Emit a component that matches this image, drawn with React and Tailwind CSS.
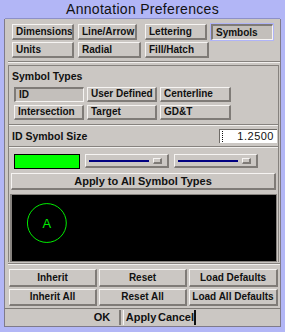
import React from "react";

const raised =
  "border-t border-l border-b-2 border-r-2 border-t-[#f6f4f2] border-l-[#f6f4f2] border-b-[#7f7b77] border-r-[#7f7b77] bg-[#cbc7c3]";
const sunken =
  "border-t-2 border-l-2 border-b border-r border-t-[#7f7b77] border-l-[#7f7b77] border-b-[#f6f4f2] border-r-[#f6f4f2] bg-[#c3bfbb]";

const Btn = ({ label, w, h = "h-[16px]", pressed, center, ring }) => (
  <div
    className={`${w} ${h} ${ring ? "outline outline-1 outline-[#b0b4f8]" : ""} ${
      pressed ? sunken : raised
    } flex items-center ${center ? "justify-center" : "pl-[3px]"} text-[10px] font-bold leading-none text-[#111] whitespace-nowrap overflow-hidden`}
  >
    {label}
  </div>
);

const Sep = ({ cls = "" }) => (
  <div className={`border-t border-b border-t-[#86827e] border-b-[#f2f0ee] ${cls}`} />
);

const Slider = ({ line, thumb }) => (
  <div className={`w-[84px] h-[14px] ${raised} flex items-center pl-[3px]`}>
    <div className={`${line} h-[2px] bg-[#000080]`} />
    <div className={`${thumb} w-[9px] h-[6px] ${raised}`} />
  </div>
);

export default function App() {
  return (
    <div
      className="w-[285px] h-[332px] bg-[#b2b6f6] flex flex-col overflow-hidden"
      style={{ fontFamily: '"Liberation Sans", Arial, sans-serif' }}
    >
      {/* title */}
      <div className="h-[19px] flex items-center justify-center text-[14px] leading-none tracking-[0.3px] text-[#111] border-b border-[#8d90c8] mx-[5px]">
        Annotation Preferences
      </div>

      <div className="flex-1 mx-[4px] mb-[5px] bg-[#cbc7c3] border-l border-r border-b border-[#7f7b8a] flex flex-col">
        {/* tabs */}
        <div className="pt-[5px] pl-[7px] flex flex-col gap-[2px]">
          <div className="flex">
            <Btn label="Dimensions" w="w-[62px]" />
            <div className="w-[4px]" />
            <Btn label="Line/Arrow" w="w-[59px]" />
            <div className="w-[8px]" />
            <Btn label="Lettering" w="w-[62px]" />
            <div className="w-[4px]" />
            <Btn label="Symbols" w="w-[62px]" pressed ring />
          </div>
          <div className="flex">
            <Btn label="Units" w="w-[62px]" />
            <div className="w-[4px]" />
            <Btn label="Radial" w="w-[63px]" />
            <div className="w-[4px]" />
            <Btn label="Fill/Hatch" w="w-[64px]" />
          </div>
        </div>

        <Sep cls="mt-[3px] ml-[3px]" />

        {/* frame */}
        <div className="mt-[2px] ml-[3px] mr-[1px] border-l border-r border-t border-l-[#86827e] border-r-[#86827e] border-t-[#86827e] flex flex-col">
          <div className="h-[15px] pl-[3px] flex items-end text-[10.5px] font-bold leading-none text-[#111]">
            Symbol Types
          </div>
          <div className="pt-[6px] pl-[5px] flex flex-col gap-[3px]">
            <div className="flex gap-[3px]">
              <Btn label="ID" w="w-[70px]" h="h-[15px]" pressed />
              <Btn label="User Defined" w="w-[70px]" h="h-[15px]" />
              <Btn label="Centerline" w="w-[71px]" h="h-[15px]" />
            </div>
            <div className="flex gap-[3px]">
              <Btn label="Intersection" w="w-[70px]" h="h-[15px]" />
              <Btn label="Target" w="w-[70px]" h="h-[15px]" />
              <Btn label="GD&T" w="w-[71px]" h="h-[15px]" />
            </div>
          </div>

          <Sep cls="mt-[4px]" />

          <div className="h-[20px] flex items-center justify-between pl-[3px] pr-[1px]">
            <span className="text-[10.5px] font-bold leading-none text-[#111]">
              ID Symbol Size
            </span>
            <div className="w-[58px] h-[14px] bg-white border-t border-l border-t-[#6f6b67] border-l-[#6f6b67] flex items-center justify-between pl-[2px] pr-[3px] text-[11px] leading-none text-[#111]">
              <span className="w-[1px] h-[11px] border-l border-dotted border-[#111]" />
              <span className="tracking-[0.5px]">1.2500</span>
            </div>
          </div>

          <Sep />

          <div className="h-[24px] flex items-center gap-[5px] pl-[5px] pt-[2px]">
            <div className="w-[66px] h-[15px] bg-[#00ff00] border border-black" />
            <Slider line="w-[60px]" thumb="ml-[4px]" />
            <Slider line="w-[60px]" thumb="ml-[4px]" />
          </div>

          <div className="px-[2px] pt-[1px]">
            <div
              className={`h-[17px] ${raised} flex items-center justify-center text-[11px] font-bold leading-none text-[#111]`}
            >
              Apply to All Symbol Types
            </div>
          </div>

          <div className="px-[1px] pt-[4px]">
            <div className="h-[68px] border border-[#86827e] border-l-[2px] border-l-[#86827e] bg-black">
              <svg width="100%" height="66" viewBox="0 0 265 66">
                <circle cx="35" cy="28" r="19.5" fill="none" stroke="#00ee00" strokeWidth="1" />
                <text
                  x="35"
                  y="33"
                  textAnchor="middle"
                  fontSize="13"
                  fill="#00ee00"
                  fontFamily="Liberation Sans, Arial, sans-serif"
                >
                  A
                </text>
              </svg>
            </div>
          </div>
        </div>

        <Sep cls="mt-[1px] ml-[3px]" />

        {/* bottom buttons */}
        <div className="pt-[4px] pl-[4px] flex flex-col gap-[2px]">
          <div className="flex gap-[2px]">
            <Btn label="Inherit" w="w-[88px]" h="h-[18px]" center />
            <Btn label="Reset" w="w-[88px]" h="h-[18px]" center />
            <Btn label="Load Defaults" w="w-[89px]" h="h-[18px]" center />
          </div>
          <div className="flex gap-[2px]">
            <Btn label="Inherit All" w="w-[88px]" h="h-[17px]" center />
            <Btn label="Reset All" w="w-[88px]" h="h-[17px]" center />
            <Btn label="Load All Defaults" w="w-[89px]" h="h-[17px]" center />
          </div>
        </div>

        <div className="mt-[2px] flex-1 border-t border-t-[#7f7b77] flex items-center justify-center">
          <div className="flex h-[15px] -ml-[4px]">
            <div className="w-[35px] flex items-center justify-center text-[11px] font-bold leading-none text-[#111] border-r-2 border-r-[#7f7b77]">
              OK
            </div>
            <div className="w-[36px] ml-[2px] flex items-center justify-center text-[11px] font-bold leading-none text-[#111] border-l border-l-[#f6f4f2]">
              Apply
            </div>
            <div className="w-[37px] flex items-center justify-center text-[11px] font-bold leading-none text-[#111] border-r-2 border-r-[#111]">
              Cancel
            </div>
          </div>
        </div>
      </div>
    </div>
  );
}
